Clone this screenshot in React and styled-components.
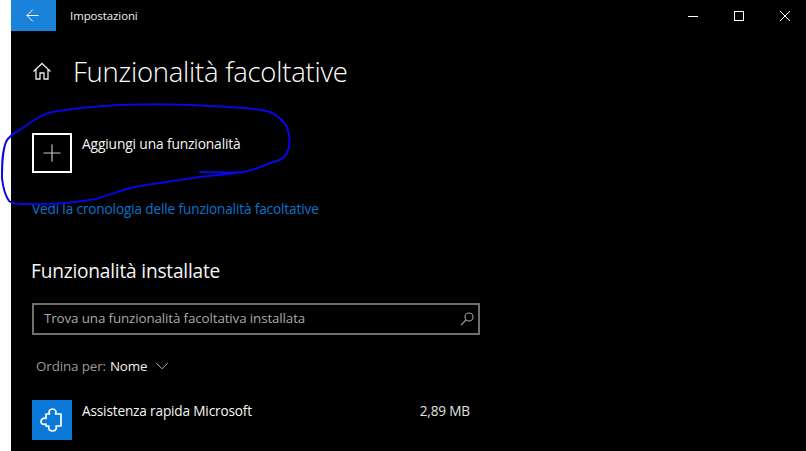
import React from "react";
import styled, { createGlobalStyle } from "styled-components";
import { ArrowLeft, Plus, ChevronDown } from "lucide-react";

const Global = createGlobalStyle`
  html, body { margin: 0; padding: 0; background: #fff; overflow: hidden; }
  body { font-family: "Open Sans", "Noto Sans", sans-serif; }
`;
const Page = styled.div`
  position: relative;
  width: 806px;
  height: 451px;
  padding-left: 11px;
  box-sizing: border-box;
  background: #fff;
  overflow: hidden;
`;
const Win = styled.div`
  height: 100%;
  background: #000;
  color: #fff;
  display: flex;
  flex-direction: column;
  overflow: hidden;
`;
const TitleBar = styled.div`
  height: 31px;
  flex: none;
  display: flex;
  align-items: center;
  padding-right: 0;
`;
const BackBtn = styled.div`
  width: 45px;
  height: 31px;
  box-sizing: border-box;
  padding-right: 3px;
  background: #1a82d9;
  display: flex;
  align-items: center;
  justify-content: center;
`;
const AppName = styled.div`
  margin-left: 14px;
  font-size: 11.4px;
  letter-spacing: -0.05px;
  color: #f2f2f2;
  flex: 1;
`;
const WinControls = styled.div`
  display: flex;
  margin-right: -2px;
`;
const WinBtn = styled.div`
  width: 46px;
  height: 31px;
  display: flex;
  align-items: center;
  justify-content: center;
`;
const Content = styled.div`
  flex: 1;
  padding-left: 21px;
  display: flex;
  flex-direction: column;
  align-items: flex-start;
`;
const Header = styled.div`
  display: flex;
  align-items: center;
  margin-top: 20px;
  height: 40px;
`;
const HomeSlot = styled.div`
  width: 41px;
  display: flex;
  align-items: center;
`;
const H1 = styled.h1`
  margin: 0;
  font-weight: 300;
  font-size: 27.5px;
  letter-spacing: -0.25px;
  color: #fff;
`;
const AddRow = styled.div`
  display: flex;
  margin-top: 42px;
`;
const AddBox = styled.div`
  width: 40px;
  height: 40px;
  box-sizing: border-box;
  border: 2px solid #fff;
  display: flex;
  align-items: center;
  justify-content: center;
`;
const RowLabel = styled.div`
  margin-left: 10px;
  margin-top: 1px;
  font-size: 13.6px;
  line-height: 20px;
  letter-spacing: -0.15px;
  color: #f5f5f5;
`;
const AddLabel = styled(RowLabel)`
  font-size: 13.8px;
`;
const Link = styled.div`
  margin-top: 26px;
  font-size: 13.6px;
  line-height: 20px;
  letter-spacing: -0.13px;
  color: #0a74cc;
`;
const H2 = styled.h2`
  margin: 39px 0 0 -1px;
  font-weight: 400;
  font-size: 19.1px;
  line-height: 26px;
  letter-spacing: -0.2px;
  color: #f5f5f5;
`;
const SearchBox = styled.div`
  width: 448px;
  height: 32px;
  box-sizing: border-box;
  margin-top: 19px;
  border: 2px solid #6f6f6f;
  display: flex;
  align-items: center;
  justify-content: space-between;
  padding: 0 4px 0 10px;
`;
const Placeholder = styled.span`
  font-size: 13.4px;
  line-height: 18px;
  margin-bottom: 2px;
  letter-spacing: -0.13px;
  color: #a8a8a8;
`;
const Sort = styled.div`
  display: flex;
  align-items: center;
  margin: 20px 0 0 4px;
  height: 22px;
  font-size: 13.4px;
  letter-spacing: -0.13px;
  color: #9a9a9a;
`;
const SortValue = styled.span`
  color: #f0f0f0;
  margin-left: 4px;
  margin-right: 4px;
  font-weight: 500;
`;
const Item = styled.div`
  display: flex;
  width: 438px;
  margin-top: 23px;
`;
const ItemIcon = styled.div`
  width: 40px;
  height: 40px;
  background: #0a78d7;
  display: flex;
`;
const Size = styled(RowLabel)`
  margin-left: auto;
  color: #e0e0e0;
`;
const Scribble = styled.svg`
  position: absolute;
  inset: 0;
  pointer-events: none;
`;

export default function App() {
  return (
    <Page>
      <Global />
      <Win>
        <TitleBar>
          <BackBtn><ArrowLeft size={19} strokeWidth={1.2} color="#fff" /></BackBtn>
          <AppName>Impostazioni</AppName>
          <WinControls>
            <WinBtn>
              <svg width="10" height="10" viewBox="0 0 10 10"><path d="M0 5.5H10" stroke="#fff" strokeWidth="1" /></svg>
            </WinBtn>
            <WinBtn>
              <svg width="10" height="10" viewBox="0 0 10 10" fill="none"><rect x="0.5" y="0.5" width="9" height="9" stroke="#fff" strokeWidth="1" /></svg>
            </WinBtn>
            <WinBtn>
              <svg width="10" height="10" viewBox="0 0 10 10"><path d="M0 0L10 10M10 0L0 10" stroke="#fff" strokeWidth="1" /></svg>
            </WinBtn>
          </WinControls>
        </TitleBar>
        <Content>
          <Header>
            <HomeSlot>
              <svg width="20" height="20" viewBox="0 0 20 20" fill="none" stroke="#e8e8e8" strokeWidth="1.3">
                <path d="M1.5 10.5L10 2.5L18.5 10.5M4 8.5V18H8V12H12V18H16V8.5" />
              </svg>
            </HomeSlot>
            <H1>Funzionalità facoltative</H1>
          </Header>
          <AddRow>
            <AddBox><Plus size={28} strokeWidth={1} color="#c4c4c4" /></AddBox>
            <AddLabel>Aggiungi una funzionalità</AddLabel>
          </AddRow>
          <Link>Vedi la cronologia delle funzionalità facoltative</Link>
          <H2>Funzionalità installate</H2>
          <SearchBox>
            <Placeholder>Trova una funzionalità facoltativa installata</Placeholder>
            <svg width="14" height="14" viewBox="0 0 14 14" fill="none" stroke="#a0a0a0" strokeWidth="1.1">
              <circle cx="9" cy="5" r="4" />
              <path d="M6 8L1 13" />
            </svg>
          </SearchBox>
          <Sort>
            Ordina per:<SortValue>Nome</SortValue>
            <ChevronDown size={22} strokeWidth={1} color="#c8c8c8" />
          </Sort>
          <Item>
            <ItemIcon>
              <svg width="40" height="40" viewBox="0 0 40 40" fill="none" stroke="#fff" strokeWidth="1.7" strokeLinejoin="round">
                <path d="M14 14H17.5C16 11 18 9 20.5 9C23 9 25 11 23.5 14H29V26H24C25.5 29 23 31 20.5 31C18 31 15.5 29 17 26H14V24C11.5 25 9 24 9 21.5C9 19 11.5 17.5 14 18.5Z" />
              </svg>
            </ItemIcon>
            <RowLabel>Assistenza rapida Microsoft</RowLabel>
            <Size>2,89 MB</Size>
          </Item>
        </Content>
      </Win>
      <Scribble width="806" height="451" viewBox="0 0 806 451" fill="none">
        <path
          d="M200 172 C215 172 232 173 243 172 C255 170 262 166 270 163 C278 161 284 159 287 153 C290 147 290 138 288 130 C285 122 279 116 270 112 C258 108 235 107 210 106 C180 104 150 104 120 105 C95 106 70 109 52 112 C42 114 34 120 26 126 C18 131 9 135 6 142 C2 152 2 165 2 178 C3 188 5 195 9 201 C14 205 25 204 40 204 C60 204 80 202 95 199 C108 196 120 190 135 187 C155 183 180 180 200 177 C215 175 230 174 243 172"
          stroke="#0606e6"
          strokeWidth="2"
          strokeLinecap="round"
        />
      </Scribble>
    </Page>
  );
}
